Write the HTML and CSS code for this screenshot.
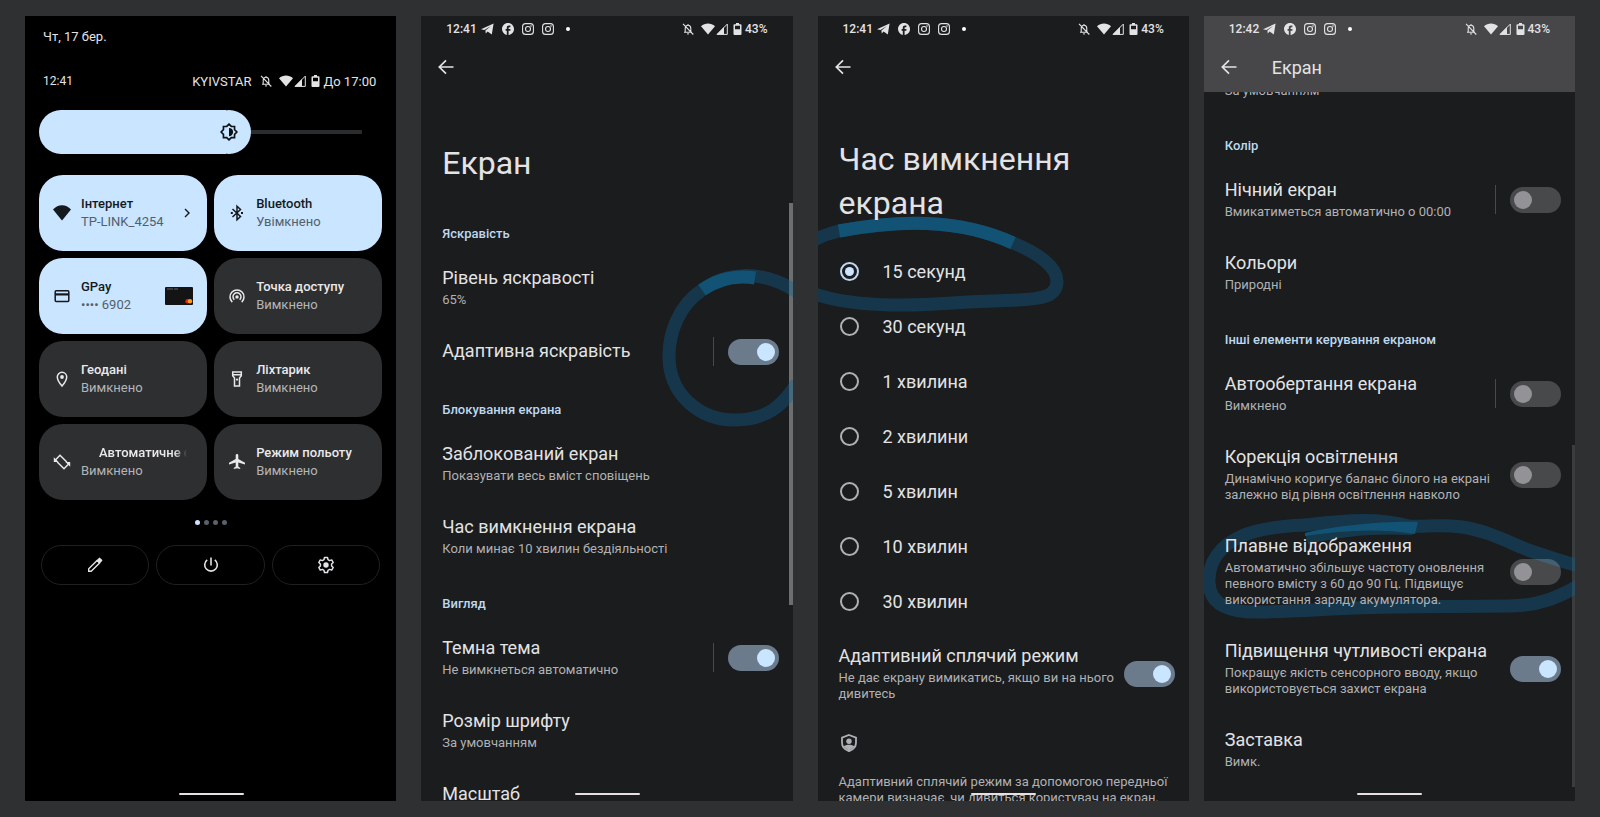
FILE: index.html
```
<!DOCTYPE html>
<html lang="uk">
  <head>
    <meta charset="UTF-8" />
    <meta name="viewport" content="width=device-width, initial-scale=1.0" />
    <title>Налаштування екрана</title>
    <link rel="stylesheet" href="styles.css">
  </head>
  <body>
    <!-- icon sprite -->
    <svg class="sprite" aria-hidden="true">
      <symbol id="i-telegram" viewBox="0 0 13 12">
        <path d="M0 6.2 12.6.6 10.8 11.4 6.6 8.6 4.8 10.6 4.4 7.6 10 2.9 3.4 7z" fill="currentColor"/>
      </symbol>
      <symbol id="i-facebook" viewBox="2 2 20 20">
        <path d="M22 12c0-5.52-4.48-10-10-10S2 6.48 2 12c0 4.84 3.44 8.87 8 9.8V15H8v-3h2V9.5C10 7.57 11.57 6 13.5 6H16v3h-2c-.55 0-1 .45-1 1v2h3v3h-3v6.95c5.05-.5 9-4.76 9-9.95z" fill="currentColor"/>
      </symbol>
      <symbol id="i-instagram" viewBox="0 0 12 12">
        <rect x=".6" y=".6" width="10.8" height="10.8" rx="3" fill="none" stroke="currentColor" stroke-width="1.1"/>
        <circle cx="6" cy="6" r="2.5" fill="none" stroke="currentColor" stroke-width="1.1"/>
        <circle cx="9" cy="3" r=".8" fill="currentColor"/>
      </symbol>
      <symbol id="i-bell" viewBox="0 0 12 12">
        <path d="M3.2 9V5.4C3.2 3.4 4.4 2.3 6 2.3s2.8 1.1 2.8 3.1V9M2 9.3h8M5.2 10.9h1.6M6 1v1.3M1 .8l10.3 10.7" fill="none" stroke="currentColor" stroke-width="1.1"/>
      </symbol>
      <symbol id="i-wifi" viewBox="0 0 14 12">
        <path d="M0 3.2C4-.4 10-.4 14 3.2L7 11.6z" fill="currentColor"/>
      </symbol>
      <symbol id="i-signal" viewBox="0 0 12 12">
        <path d="M11.3 1.1V11.4H1z" fill="none" stroke="currentColor" stroke-width="1"/>
        <path d="M8 4v7.5H.8z" fill="currentColor"/>
      </symbol>
      <symbol id="i-battery" viewBox="0 0 9 12">
        <path d="M3 0h3v1.2h1.6c.5 0 .9.4.9.9v9c0 .5-.4.9-.9.9H1.4c-.5 0-.9-.4-.9-.9v-9c0-.5.4-.9.9-.9H3zM2 2.7v3.6h5V2.7z" fill="currentColor" fill-rule="evenodd"/>
      </symbol>
      <symbol id="i-back" viewBox="0 0 16 16">
        <path d="M15.5 8H1.5M8 1.3 1.3 8 8 14.7" fill="none" stroke="currentColor" stroke-width="1.7"/>
      </symbol>
    </svg>

    <main class="screens">
      <!-- quick settings -->
      <section class="phone shade">
        <div class="shade-inner">
          <p class="date">Чт, 17 бер.</p>
          <div class="shade-status">
            <span class="time">12:41</span>
            <span class="carrier">KYIVSTAR</span>
            <svg class="icon bell"><use href="#i-bell"/></svg>
            <svg class="wifi"><use href="#i-wifi"/></svg>
            <svg class="icon signal"><use href="#i-signal"/></svg>
            <svg class="battery"><use href="#i-battery"/></svg>
            <span>До 17:00</span>
          </div>
          <div class="brightness">
            <input type="range" min="0" max="100" value="60" aria-label="Яскравість" />
            <svg class="sun" viewBox="0 0 24 24"><path d="M12 1.5 15.1 4.6h4.3v4.3L22.5 12l-3.1 3.1v4.3h-4.3L12 22.5l-3.1-3.1H4.6v-4.3L1.5 12l3.1-3.1V4.6h4.3z" fill="none" stroke="#0c1116" stroke-width="2.2"/><path d="M12 6.5a5.5 5.5 0 0 1 0 11z" fill="#0c1116"/></svg>
          </div>

          <div class="tiles">
            <button class="tile on">
              <svg class="tile-icon" viewBox="0 0 18 18"><path d="M0 5.5C5-.2 13-.2 18 5.5L9 16.5z" fill="currentColor"/></svg>
              <span class="tile-text"><b>Інтернет</b><span>TP-LINK_4254</span></span>
              <svg class="chevron" viewBox="0 0 8 10"><path d="M2 1l4 4-4 4" fill="none" stroke="currentColor" stroke-width="1.4"/></svg>
            </button>
            <button class="tile on">
              <svg class="tile-icon" viewBox="0 0 18 18"><path d="M4.5 5l8 7.5L9 15.8V2.2l3.5 3.3-8 7.5" fill="none" stroke="currentColor" stroke-width="1.5"/><path d="M2.8 8h2v2h-2zM13 8h2v2h-2z" fill="currentColor"/></svg>
              <span class="tile-text"><b>Bluetooth</b><span>Увімкнено</span></span>
            </button>
            <button class="tile on">
              <svg class="tile-icon" viewBox="0 0 18 18"><rect x="2.2" y="3.7" width="13.6" height="10.8" rx="1" fill="none" stroke="currentColor" stroke-width="1.5"/><path d="M2 6.3h14v2.2H2z" fill="currentColor"/></svg>
              <span class="tile-text"><b>GPay</b><span>•••• 6902</span></span>
              <svg class="card" viewBox="0 0 28 18"><rect width="28" height="18" rx="1" fill="#141414"/><path d="M2 2h6M9 2h4" stroke="#777" stroke-width=".8"/><circle cx="22.5" cy="14.2" r="2.2" fill="#e2231a"/><circle cx="25" cy="14.2" r="2.2" fill="#f79e1b"/></svg>
            </button>
            <button class="tile">
              <svg class="tile-icon" viewBox="0 0 18 18"><g fill="none" stroke="currentColor" stroke-width="1.5"><path d="M4.3 15.1a7 7 0 1 1 9.4 0"/><path d="M6.3 12.7a4 4 0 1 1 5.4 0"/></g><circle cx="9" cy="10" r="1.7" fill="currentColor"/></svg>
              <span class="tile-text"><b>Точка доступу</b><span>Вимкнено</span></span>
            </button>
            <button class="tile">
              <svg class="tile-icon" viewBox="0 0 18 18"><path d="M9 16C6 12.6 4.3 9.5 4.3 7a4.7 4.7 0 0 1 9.4 0c0 2.5-1.7 5.6-4.7 9z" fill="none" stroke="currentColor" stroke-width="1.5"/><circle cx="9" cy="7" r="1.9" fill="currentColor"/></svg>
              <span class="tile-text"><b>Геодані</b><span>Вимкнено</span></span>
            </button>
            <button class="tile">
              <svg class="tile-icon" viewBox="0 0 18 18"><path d="M4.7 1.9h8.6v3.9l-1.8 2.3v8h-5v-8L4.7 5.8zM4.7 4.7h8.6" fill="none" stroke="currentColor" stroke-width="1.5"/><circle cx="9" cy="9.6" r="1.1" fill="currentColor"/></svg>
              <span class="tile-text"><b>Ліхтарик</b><span>Вимкнено</span></span>
            </button>
            <button class="tile">
              <svg class="tile-icon" viewBox="0 0 18 18"><path d="M3.5 8 2.4 6.900 7 2.300 13.800 9M14.600 10l1 1.100L11 15.700 4.200 9" fill="none" stroke="currentColor" stroke-width="1.5"/><path d="M.8 4.300v4.800h4.800zM17.200 13.700V8.900h-4.800z" fill="currentColor"/></svg>
              <span class="tile-text marquee"><b>Автоматичне обертання</b><span>Вимкнено</span></span>
            </button>
            <button class="tile">
              <svg class="tile-icon" viewBox="0 0 18 18"><path d="M17 11.5v-1.7L10.3 6V2.2a1.3 1.3 0 0 0-2.6 0V6L1 9.8v1.7l6.7-2v4l-1.9 1.4v1.2L9 15.3l3.2.8v-1.2l-1.9-1.4v-4z" fill="currentColor"/></svg>
              <span class="tile-text"><b>Режим польоту</b><span>Вимкнено</span></span>
            </button>
          </div>

          <div class="dots"><i class="active"></i><i></i><i></i><i></i></div>

          <div class="actions">
            <button aria-label="Редагувати"><svg viewBox="0 0 18 18"><path d="M2.7 15.3v-2.5l8.4-8.4 2.5 2.5-8.4 8.4z" fill="none" stroke="currentColor" stroke-width="1.4"/><path d="M10.4 4.4 12.9 1.9a1 1 0 0 1 1.3 0L16.1 3.8a1 1 0 0 1 0 1.3l-2.5 2.5z" fill="currentColor"/></svg></button>
            <button aria-label="Живлення"><svg viewBox="0 0 18 18"><path d="M9 1.5v8M5.2 3.8a6.3 6.3 0 1 0 7.6 0" fill="none" stroke="currentColor" stroke-width="1.6"/></svg></button>
            <button aria-label="Налаштування"><svg viewBox="0 0 18 18"><path d="M7.5 1.5h3l.5 2.2 1.6.9 2.1-.7 1.5 2.6-1.6 1.5v2l1.6 1.5-1.5 2.6-2.1-.7-1.6.9-.5 2.2h-3L7 14.3l-1.6-.9-2.1.7-1.500-2.600L3.400 10V8L1.800 6.500l1.500-2.600 2.100.7L7 3.700z" fill="none" stroke="currentColor" stroke-width="1.5" stroke-linejoin="round"/><circle cx="9" cy="9" r="2.7" fill="currentColor"/></svg></button>
          </div>
        </div>
        <div class="home-bar"></div>
      </section>

      <!-- display settings, top -->
      <section class="phone">
        <div class="scrollbar top"></div>
        <svg class="mark">
          <path d="M376 276C340 252 303 257 281 274C257 290 248 318 248 340C248 379 279 404 314 404C345 404 362 390 376 367"/>
          <path class="overlap" d="M281 274C297 263 315 259 334 262"/>
        </svg>
        <header>
          <div class="status">
            <span>12:41</span>
            <svg class="telegram"><use href="#i-telegram"/></svg>
            <svg class="icon"><use href="#i-facebook"/></svg>
            <svg class="icon"><use href="#i-instagram"/></svg>
            <svg class="icon"><use href="#i-instagram"/></svg>
            <i class="more"></i>
            <svg class="icon bell"><use href="#i-bell"/></svg>
            <svg class="wifi"><use href="#i-wifi"/></svg>
            <svg class="icon signal"><use href="#i-signal"/></svg>
            <svg class="battery"><use href="#i-battery"/></svg>
            <span>43%</span>
          </div>
          <div class="bar"><button class="back" aria-label="Назад"><svg><use href="#i-back"/></svg></button></div>
        </header>
        <div class="content">
          <h1>Екран</h1>
          <h2>Яскравість</h2>
          <div class="item">
            <div class="text"><h3>Рівень яскравості</h3><p>65%</p></div>
          </div>
          <div class="item">
            <div class="text"><h3><label for="adaptive">Адаптивна яскравість</label></h3></div>
            <span class="divider"></span>
            <input type="checkbox" class="switch" id="adaptive" checked />
          </div>
          <h2>Блокування екрана</h2>
          <div class="item">
            <div class="text"><h3>Заблокований екран</h3><p>Показувати весь вміст сповіщень</p></div>
          </div>
          <div class="item">
            <div class="text"><h3>Час вимкнення екрана</h3><p>Коли минає 10 хвилин бездіяльності</p></div>
          </div>
          <h2>Вигляд</h2>
          <div class="item">
            <div class="text"><h3><label for="dark">Темна тема</label></h3><p>Не вимкнеться автоматично</p></div>
            <span class="divider"></span>
            <input type="checkbox" class="switch" id="dark" checked />
          </div>
          <div class="item">
            <div class="text"><h3>Розмір шрифту</h3><p>За умовчанням</p></div>
          </div>
          <div class="item">
            <div class="text"><h3>Масштаб</h3></div>
          </div>
        </div>
        <div class="home-bar"></div>
      </section>

      <!-- screen timeout -->
      <section class="phone">
        <svg class="mark">
          <path d="M-6 225C5 219 12 217 21 215C80 204 140 202 195 227C220 237 239 251 239 265C239 280 225 283 200 284L150 286C110 289 40 294-6 277"/>
          <path class="overlap" d="M21 215C80 204 140 202 195 227"/>
        </svg>
        <header>
          <div class="status">
            <span>12:41</span>
            <svg class="telegram"><use href="#i-telegram"/></svg>
            <svg class="icon"><use href="#i-facebook"/></svg>
            <svg class="icon"><use href="#i-instagram"/></svg>
            <svg class="icon"><use href="#i-instagram"/></svg>
            <i class="more"></i>
            <svg class="icon bell"><use href="#i-bell"/></svg>
            <svg class="wifi"><use href="#i-wifi"/></svg>
            <svg class="icon signal"><use href="#i-signal"/></svg>
            <svg class="battery"><use href="#i-battery"/></svg>
            <span>43%</span>
          </div>
          <div class="bar"><button class="back" aria-label="Назад"><svg><use href="#i-back"/></svg></button></div>
        </header>
        <div class="content">
          <h1 class="two-lines">Час вимкнення<br>екрана</h1>
          <div class="options">
            <label><input type="radio" name="timeout" checked />15 секунд</label>
            <label><input type="radio" name="timeout" />30 секунд</label>
            <label><input type="radio" name="timeout" />1 хвилина</label>
            <label><input type="radio" name="timeout" />2 хвилини</label>
            <label><input type="radio" name="timeout" />5 хвилин</label>
            <label><input type="radio" name="timeout" />10 хвилин</label>
            <label><input type="radio" name="timeout" />30 хвилин</label>
          </div>
          <div class="item">
            <div class="text"><h3><label for="attention">Адаптивний сплячий режим</label></h3><p>Не дає екрану вимикатись, якщо ви на нього дивитесь</p></div>
            <input type="checkbox" class="switch" id="attention" checked />
          </div>
          <div class="note">
            <svg viewBox="0 0 16 18"><path d="M8 1 15 3.6v5c0 4-3 7.3-7 8.6-4-1.3-7-4.6-7-8.6v-5z" fill="none" stroke="currentColor" stroke-width="1.8"/><circle cx="8" cy="7.3" r="2.7" fill="currentColor"/><path d="M2.5 12.500C5 10.300 11 10.300 13.500 12.500L8 17z" fill="currentColor"/></svg>
            <p>Адаптивний сплячий режим за допомогою передньої камери визначає, чи дивиться користувач на екран.</p>
          </div>
        </div>
        <div class="home-bar"></div>
      </section>

      <!-- display settings, scrolled to the end -->
      <section class="phone last">
        <div class="scrollbar end"></div>
        <svg class="mark">
          <path d="M376 550C365 548 345 541 324 534C300 524 280 514 258 511C235 508 222 511 205 510C170 501 140 505 100 509C80 510 55 512 38 520C15 530 4 547 5 567C6 590 28 597 58 596C100 595 150 591 191 591L305 590C335 590 355 581 376 569"/>
          <path class="tail" d="M101 517C135 511 175 508 211 514L208 519C170 517 140 520 104 528z"/>
          <path class="overlap-fill" d="M101 517C130 510 180 505 214 506L211 518C175 512 140 514 101 520z"/>
        </svg>
        <header class="raised">
          <div class="status">
            <span>12:42</span>
            <svg class="telegram"><use href="#i-telegram"/></svg>
            <svg class="icon"><use href="#i-facebook"/></svg>
            <svg class="icon"><use href="#i-instagram"/></svg>
            <svg class="icon"><use href="#i-instagram"/></svg>
            <i class="more"></i>
            <svg class="icon bell"><use href="#i-bell"/></svg>
            <svg class="wifi"><use href="#i-wifi"/></svg>
            <svg class="icon signal"><use href="#i-signal"/></svg>
            <svg class="battery"><use href="#i-battery"/></svg>
            <span>43%</span>
          </div>
          <div class="bar"><button class="back" aria-label="Назад"><svg><use href="#i-back"/></svg></button><span>Екран</span></div>
        </header>
        <div class="content scrolled">
          <div class="item">
            <div class="text"><p>За умовчанням</p></div>
          </div>
          <h2>Колір</h2>
          <div class="item">
            <div class="text"><h3><label for="night">Нічний екран</label></h3><p>Вмикатиметься автоматично о 00:00</p></div>
            <span class="divider"></span>
            <input type="checkbox" class="switch" id="night" />
          </div>
          <div class="item">
            <div class="text"><h3>Кольори</h3><p>Природні</p></div>
          </div>
          <h2>Інші елементи керування екраном</h2>
          <div class="item">
            <div class="text"><h3><label for="rotate">Автообертання екрана</label></h3><p>Вимкнено</p></div>
            <span class="divider"></span>
            <input type="checkbox" class="switch" id="rotate" />
          </div>
          <div class="item">
            <div class="text"><h3><label for="balance">Корекція освітлення</label></h3><p>Динамічно коригує баланс білого на екрані залежно від рівня освітлення навколо</p></div>
            <input type="checkbox" class="switch" id="balance" />
          </div>
          <div class="item">
            <div class="text"><h3><label for="smooth">Плавне відображення</label></h3><p>Автоматично збільшує частоту оновлення певного вмісту з 60 до 90 Гц. Підвищує використання заряду акумулятора.</p></div>
            <input type="checkbox" class="switch" id="smooth" />
          </div>
          <div class="item">
            <div class="text"><h3><label for="touch">Підвищення чутливості екрана</label></h3><p>Покращує якість сенсорного вводу, якщо використовується захист екрана</p></div>
            <input type="checkbox" class="switch" id="touch" checked />
          </div>
          <div class="item">
            <div class="text"><h3>Заставка</h3><p>Вимк.</p></div>
          </div>
        </div>
        <div class="home-bar"></div>
      </section>
    </main>
  </body>
</html>
```

FILE: styles.css
```
* {
  box-sizing: border-box;
}

body {
  margin: 0;
  background-color: #2f3032;
  color: #e3e3e5;
  font-family: Roboto, "Noto Sans", sans-serif;
}

h1,
h2,
h3,
p {
  margin: 0;
}

button {
  border: none;
  padding: 0;
  background: none;
  color: inherit;
  font-family: inherit;
  cursor: pointer;
}

svg {
  display: block;
  flex: none;
}

.sprite {
  position: absolute;
  width: 0;
  height: 0;
}

.screens {
  display: flex;
  gap: 25px;
  padding: 16px 25px;
}

.phone {
  position: relative;
  flex: 1;
  min-width: 0;
  height: calc(100vh - 32px);
  overflow: hidden;
  background-color: #1b1c1e;
}

.phone.last {
  margin-left: -10px;
}

.home-bar {
  position: absolute;
  left: 50%;
  bottom: 6px;
  width: 65px;
  height: 2px;
  margin-left: -32px;
  border-radius: 1px;
  background-color: #e6e0e2;
  z-index: 2;
}

/* status icons */
.icon {
  width: 12px;
  height: 12px;
}

.telegram {
  width: 13px;
  height: 12px;
}

.wifi {
  width: 14px;
  height: 12px;
  margin-left: 7px;
}

.signal {
  margin-left: 1px;
}

.battery {
  width: 9px;
  height: 12px;
  margin: 0 3px 0 5px;
}

/* quick settings */
.shade {
  background-color: #000;
}

.shade-inner {
  padding: 0 14px;
}

.date {
  padding: 12px 4px 0;
  font-size: 13px;
  line-height: 18px;
}

.shade-status {
  display: flex;
  align-items: center;
  height: 18px;
  margin-top: 26px;
  padding: 0 6px 0 4px;
  font-size: 13px;
}

.time {
  font-size: 12px;
}

.carrier {
  margin-left: auto;
  margin-right: 9px;
}

.brightness {
  position: relative;
  margin: 20px 20px 21px 0;
}

.brightness input {
  appearance: none;
  display: block;
  width: 100%;
  height: 44px;
  margin: 0;
  border-radius: 22px;
  background: linear-gradient(#c9e5ff, #c9e5ff) 0 0 / 58% 100% no-repeat,
    linear-gradient(#2b2c2e, #2b2c2e) 0 50% / 100% 4px no-repeat;
}

.brightness input::-webkit-slider-thumb {
  appearance: none;
  width: 44px;
  height: 44px;
  border-radius: 22px;
  background-color: #c9e5ff;
}

.sun {
  position: absolute;
  left: 56%;
  top: 13px;
  width: 18px;
  height: 18px;
  pointer-events: none;
}

.tiles {
  display: grid;
  grid-template-columns: repeat(2, minmax(0, 1fr));
  gap: 7px;
}

.tile {
  display: flex;
  align-items: center;
  height: 76px;
  padding: 0 14px;
  border-radius: 24px;
  background-color: #2e2f31;
  color: #e9e9eb;
  font-size: 13px;
  line-height: 18px;
  text-align: left;
}

.tile.on {
  background-color: #c9e5ff;
  color: #15191d;
}

.tile-icon {
  width: 18px;
  height: 18px;
  margin-right: 10px;
}

.tile-text {
  flex: 1;
  min-width: 0;
  white-space: nowrap;
}

.tile-text b {
  display: block;
  font-weight: 500;
}

.tile-text span {
  display: block;
  color: #b4b5b8;
}

.tile.on .tile-text span {
  color: #52606c;
}

.marquee b {
  overflow: hidden;
  margin-right: 6px;
  padding-left: 18px;
  mask-image: linear-gradient(to right, #000 88%, transparent);
}

.chevron {
  width: 8px;
  height: 10px;
  margin-right: 2px;
}

.card {
  width: 28px;
  height: 18px;
}

.dots {
  display: flex;
  justify-content: center;
  gap: 4px;
  margin: 20px 0;
}

.dots i {
  width: 5px;
  height: 5px;
  border-radius: 50%;
  background-color: #59616a;
}

.dots .active {
  background-color: #c9e5ff;
}

.actions {
  display: grid;
  grid-template-columns: 1fr 1fr 1fr;
  gap: 7px;
  margin: 0 2px;
}

.actions button {
  display: flex;
  align-items: center;
  justify-content: center;
  height: 40px;
  border: 1px solid #1f2021;
  border-radius: 20px;
}

.actions svg {
  width: 18px;
  height: 18px;
}

/* settings screens */
header {
  position: relative;
  z-index: 2;
}

header.raised {
  background-color: #474749;
}

.status {
  display: flex;
  align-items: center;
  height: 26px;
  padding: 0 25px;
  font-size: 12px;
  font-weight: 500;
}

.status .telegram {
  margin-left: 4px;
}

.status .icon + .icon,
.telegram + .icon {
  margin-left: 8px;
}

.more {
  width: 4px;
  height: 4px;
  margin-left: 12px;
  border-radius: 50%;
  background-color: #fff;
}

.status .bell {
  margin-left: auto;
}

.bar {
  display: flex;
  align-items: center;
  height: 50px;
  padding: 0 17px;
  font-size: 18px;
}

.back {
  width: 16px;
  height: 16px;
  margin-right: 35px;
}

.back svg {
  width: 16px;
  height: 16px;
}

.content {
  position: relative;
  z-index: 1;
}

h1 {
  padding: 49px 21px 18px;
  font-size: 32px;
  font-weight: 400;
  line-height: 44px;
}

h1.two-lines {
  padding: 45px 21px 19px;
}

h2 {
  padding: 23px 21px 9px;
  color: #bcd9f0;
  font-size: 13px;
  font-weight: 500;
  line-height: 16px;
}

.item {
  display: flex;
  align-items: center;
  padding: 0 14px 0 21px;
}

.text {
  flex: 1;
  padding: 15px 0 16px;
}

.text h3 {
  font-size: 18px;
  font-weight: 400;
  line-height: 24px;
}

.text p {
  margin-top: 2px;
  color: #b0b1b4;
  font-size: 13px;
  line-height: 16px;
}

.divider {
  width: 1px;
  height: 29px;
  margin-right: 14px;
  background-color: #48494b;
}

.switch {
  appearance: none;
  display: flex;
  align-items: center;
  flex: none;
  width: 51px;
  height: 26px;
  margin: 0;
  padding: 0 4px;
  border-radius: 13px;
  background-color: rgba(255, 255, 255, 0.2);
}

.switch::before {
  content: "";
  width: 18px;
  height: 18px;
  border-radius: 50%;
  background-color: #939397;
}

.switch:checked {
  justify-content: flex-end;
  background-color: #6b7b8b;
}

.switch:checked::before {
  background-color: #c9e5ff;
}

.options label {
  display: flex;
  align-items: center;
  height: 55px;
  padding: 0 22px;
  font-size: 18px;
}

.options input {
  appearance: none;
  display: grid;
  place-items: center;
  width: 19px;
  height: 19px;
  margin: 0 24px 0 0;
  border: 2px solid #b0b1b4;
  border-radius: 50%;
}

.options input:checked {
  border-color: #bcd9f0;
}

.options input:checked::before {
  content: "";
  width: 9px;
  height: 9px;
  border-radius: 50%;
  background-color: #c9e5ff;
}

.note {
  padding: 16px 14px 16px 21px;
  color: #b0b1b4;
}

.note svg {
  width: 16px;
  height: 18px;
  margin: 0 2px 22px;
}

.note p {
  font-size: 13px;
  line-height: 16px;
}

.scrolled {
  margin-top: -26px;
}

.scrollbar {
  position: absolute;
  right: 0;
  width: 4px;
  background-color: #6c6e70;
}

.scrollbar.top {
  top: 187px;
  bottom: 196px;
}

.scrollbar.end {
  top: 429px;
  bottom: 14px;
  width: 3px;
  background-color: #3b3c3e;
}

/* marker strokes */
.mark {
  position: absolute;
  left: 0;
  top: 0;
  width: 100%;
  height: 100%;
}

.mark path {
  fill: none;
  stroke: rgba(14, 98, 142, 0.4);
  stroke-width: 13px;
}

.mark .overlap {
  stroke: #125375;
}

.mark .overlap-fill {
  fill: #125375;
  stroke: none;
}

.mark .tail {
  fill: #16384b;
  stroke: none;
}
```
